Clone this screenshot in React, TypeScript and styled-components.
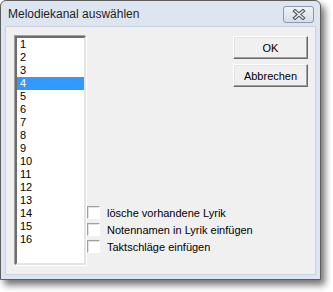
import styled, { createGlobalStyle } from "styled-components"

const GlobalStyle = createGlobalStyle`
	body {
		margin: 0;
		background: #ffffff;
		font-family: "Liberation Sans", Arial, sans-serif;
	}
`

const Page = styled.div`
	width: 333px;
	height: 292px;
`

const Window = styled.div`
	width: 321px;
	height: 280px;
	box-sizing: border-box;
	border: 1px solid #5e5e5e;
	border-radius: 6px 6px 0 0;
	background: #dde6f0;
	display: flex;
	flex-direction: column;
	padding: 0 4px 4px 4px;
	box-shadow: 4px 5px 7px rgba(0, 0, 0, 0.55);
`

const TitleBar = styled.div`
	height: 25px;
	display: flex;
	align-items: center;
	padding-left: 3px;
	font-family: "Liberation Sans", Arial, sans-serif;
	font-size: 12px;
	color: #1e1e1e;
	position: relative;
`

const CloseButton = styled.div`
	position: absolute;
	right: 2px;
	top: 5px;
	width: 29px;
	height: 15px;
	border: 1px solid #8c99a8;
	border-radius: 3px;
	background: linear-gradient(#eef2f7, #d6dee8);
	display: flex;
	align-items: center;
	justify-content: center;
`

const Client = styled.div`
	flex: 1;
	min-width: 0;
	background: #f0f0f0;
	border: 1px solid #c9d3df;
	display: flex;
	padding: 9px 7px 0 9px;
	font-size: 11px;
	color: #000;
`

const ListBox = styled.div`
	width: 71px;
	height: 229px;
	box-sizing: border-box;
	background: #fff;
	border-style: solid;
	border-width: 2px;
	border-color: #6d6d6d #e3e3e3 #e3e3e3 #6d6d6d;
	box-shadow: -1px -1px 0 #a0a0a0, 1px 1px 0 #ffffff;
	display: flex;
	flex-direction: column;
	flex-shrink: 0;
`

const ListItem = styled.div<{ $selected?: boolean }>`
	height: 13px;
	line-height: 13px;
	padding-left: 3px;
	background: ${p => (p.$selected ? "#3399ff" : "transparent")};
	color: ${p => (p.$selected ? "#fff" : "#000")};
`

const Options = styled.div`
	flex: 1;
	min-width: 0;
	display: flex;
	flex-direction: column;
	justify-content: flex-end;
	padding: 0 0 21px 1px;
	gap: 4px;
`

const CheckRow = styled.label`
	display: flex;
	align-items: center;
	gap: 7px;
	height: 13px;
	white-space: nowrap;
`

const CheckBox = styled.span`
	width: 13px;
	height: 13px;
	box-sizing: border-box;
	background: #fff;
	border-style: solid;
	border-width: 1px;
	border-color: #a0a0a0 #ffffff #ffffff #a0a0a0;
	box-shadow: inset 1px 1px 0 #e3e3e3;
	flex-shrink: 0;
`

const Buttons = styled.div`
	flex-shrink: 0;
	display: flex;
	flex-direction: column;
	gap: 5px;
`

const Button = styled.button`
	width: 75px;
	height: 23px;
	box-sizing: border-box;
	background: #f0f0f0;
	font-family: "Liberation Sans", Arial, sans-serif;
	font-size: 11px;
	color: #000;
	border-style: solid;
	border-width: 1px;
	border-color: #ffffff #696969 #696969 #ffffff;
	box-shadow: inset -1px -1px 0 #a0a0a0, inset 1px 1px 0 #e3e3e3;
	padding: 0;
`

const channels = Array.from({ length: 16 }, (_, i) => String(i + 1))

export default function App() {
	return (
		<Page>
			<GlobalStyle />
			<Window>
				<TitleBar>
					Melodiekanal auswählen
					<CloseButton>
						<svg width="14" height="11" viewBox="0 0 14 11">
							<path d="M3 2 L11 9 M11 2 L3 9" stroke="#4b5563" strokeWidth="3.6" strokeLinecap="square" />
							<path d="M3 2 L11 9 M11 2 L3 9" stroke="#f4f6f9" strokeWidth="1.4" strokeLinecap="square" />
						</svg>
					</CloseButton>
				</TitleBar>
				<Client>
					<ListBox>
						{channels.map(c => (
							<ListItem key={c} $selected={c === "4"}>
								{c}
							</ListItem>
						))}
					</ListBox>
					<Options>
						<CheckRow>
							<CheckBox />
							lösche vorhandene Lyrik
						</CheckRow>
						<CheckRow>
							<CheckBox />
							Notennamen in Lyrik einfügen
						</CheckRow>
						<CheckRow>
							<CheckBox />
							Taktschläge einfügen
						</CheckRow>
					</Options>
					<Buttons>
						<Button>OK</Button>
						<Button>Abbrechen</Button>
					</Buttons>
				</Client>
			</Window>
		</Page>
	)
}
